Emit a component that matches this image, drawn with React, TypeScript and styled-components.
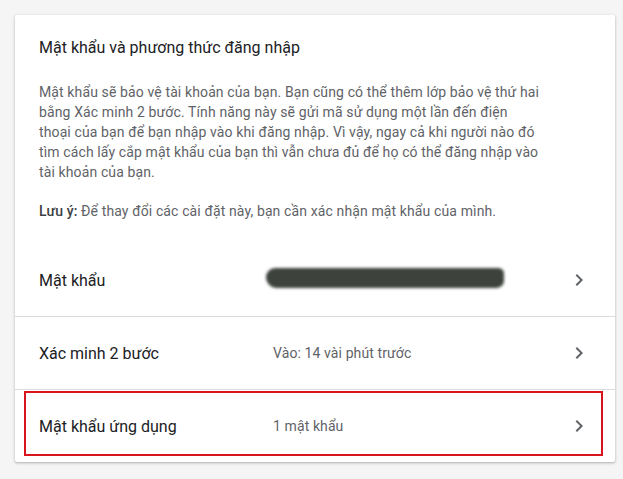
import styled, { createGlobalStyle } from "styled-components";

const GlobalStyle = createGlobalStyle`
  html, body {
    margin: 0;
    padding: 0;
    background: #f5f5f5;
    font-family: Roboto, "Noto Sans", "Liberation Sans", sans-serif;
  }
`;

const Page = styled.div`
  padding: 15px 8px 17px 15px;
`;

const Card = styled.section`
  width: 600px;
  background: #fff;
  box-shadow: 0 1px 2px rgba(60, 64, 67, 0.25), 0 1px 3px 1px rgba(60, 64, 67, 0.1);
  border-radius: 2px;
`;

const Header = styled.div`
  padding: 21px 24px 23px 24px;
`;

const Title = styled.h2`
  margin: 0 0 22px;
  font-size: 16px;
  line-height: 24px;
  font-weight: 400;
  color: #202124;
`;

const Text = styled.p<{ $gap?: number }>`
  margin: 0 0 ${(p) => p.$gap ?? 0}px;
  font-size: 14px;
  line-height: 20px;
  letter-spacing: 0.12px;
  white-space: nowrap;
  color: #5f6368;

  b {
    font-weight: 500;
    color: #3c4043;
  }
`;

const Row = styled.div<{ $last?: boolean }>`
  position: relative;
  display: flex;
  align-items: center;
  height: 72px;
  padding: 0 24px;
  border-bottom: ${(p) => (p.$last ? "none" : "1px solid #dadce0")};
`;

const Label = styled.div`
  width: 234px;
  flex-shrink: 0;
  font-size: 16px;
  color: #202124;
`;

const Value = styled.div`
  flex: 1;
  font-size: 14px;
  letter-spacing: 0.1px;
  color: #5f6368;
`;

const Redacted = styled.div`
  width: 238px;
  height: 20px;
  margin-left: -7px;
  margin-top: -4px;
  background: #3d423d;
  border-radius: 10px 6px 8px 12px;
  filter: blur(1.5px);
`;

const Chevron = styled.svg`
  width: 24px;
  height: 24px;
  flex-shrink: 0;
  fill: #5f6368;
`;

const Highlight = styled.div`
  position: absolute;
  left: 9px;
  top: 1px;
  right: 12px;
  bottom: 6px;
  border: 2px solid #d9141c;
  pointer-events: none;
`;

function ChevronIcon() {
  return (
    <Chevron viewBox="0 0 24 24">
      <path d="M8.59 16.59 13.17 12 8.59 7.41 10 6l6 6-6 6-1.41-1.41z" />
    </Chevron>
  );
}

export default function App() {
  return (
    <>
      <GlobalStyle />
      <Page>
        <Card>
          <Header>
            <Title>Mật khẩu và phương thức đăng nhập</Title>
            <Text $gap={19}>
              Mật khẩu sẽ bảo vệ tài khoản của bạn. Bạn cũng có thể thêm lớp bảo vệ thứ hai
              <br />
              bằng Xác minh 2 bước. Tính năng này sẽ gửi mã sử dụng một lần đến điện
              <br />
              thoại của bạn để bạn nhập vào khi đăng nhập. Vì vậy, ngay cả khi người nào đó
              <br />
              tìm cách lấy cắp mật khẩu của bạn thì vẫn chưa đủ để họ có thể đăng nhập vào
              <br />
              tài khoản của bạn.
            </Text>
            <Text>
              <b>Lưu ý:</b> Để thay đổi các cài đặt này, bạn cần xác nhận mật khẩu của mình.
            </Text>
          </Header>
          <Row>
            <Label>Mật khẩu</Label>
            <Value>
              <Redacted />
            </Value>
            <ChevronIcon />
          </Row>
          <Row>
            <Label>Xác minh 2 bước</Label>
            <Value>Vào: 14 vài phút trước</Value>
            <ChevronIcon />
          </Row>
          <Row $last>
            <Label>Mật khẩu ứng dụng</Label>
            <Value>1 mật khẩu</Value>
            <ChevronIcon />
            <Highlight />
          </Row>
        </Card>
      </Page>
    </>
  );
}
